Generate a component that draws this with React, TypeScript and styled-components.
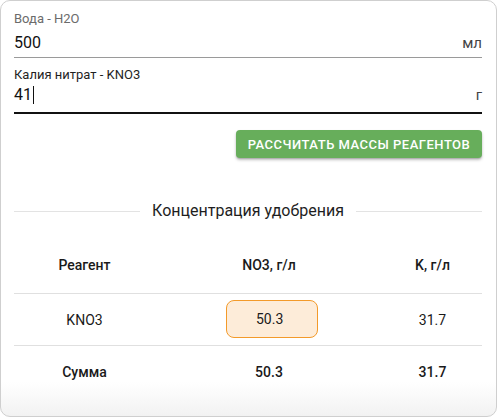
import React from "react";
import styled, { createGlobalStyle } from "styled-components";

const Global = createGlobalStyle`
  html, body { margin: 0; padding: 0; background: #fff; }
  body { font-family: Roboto, "Noto Sans", Arial, sans-serif; color: #1e1e1e; }
  * { box-sizing: border-box; }
`;

const Card = styled.div`
  width: 497px;
  height: 417px;
  border: 1px solid #cfcfcf;
  border-radius: 10px;
  padding: 10px 14px 0 13px;
  background: linear-gradient(to bottom, #fff 0, #fff calc(100% - 34px), #f2f2f2 100%);
  display: flex;
  flex-direction: column;
`;

const Field = styled.div<{ $gap: number }>`
  display: flex;
  flex-direction: column;
  margin-top: ${(p) => p.$gap}px;
`;

const Label = styled.label<{ $dark?: boolean }>`
  font-size: 13px;
  line-height: 16px;
  color: ${(p) => (p.$dark ? "#1f1f1f" : "#6b6b6b")};
`;

const InputRow = styled.div<{ $focused?: boolean; $top: number }>`
  display: flex;
  align-items: center;
  justify-content: space-between;
  margin-top: ${(p) => p.$top}px;
  font-size: 16px;
  line-height: 24px;
  padding-bottom: ${(p) => (p.$focused ? 5 : 2)}px;
  border-bottom: ${(p) => (p.$focused ? "2px solid #111" : "1px solid #9a9a9a")};
`;

const Value = styled.span`
  color: #111;
  display: inline-flex;
  align-items: center;
`;

const Caret = styled.span`
  display: inline-block;
  width: 1px;
  height: 18px;
  background: #111;
  margin-left: 1px;
`;

const Unit = styled.span`
  color: #444;
  font-size: 15px;
`;

const Actions = styled.div`
  display: flex;
  justify-content: flex-end;
  margin-top: 16px;
`;

const Button = styled.button`
  height: 28px;
  width: 246px;
  border: none;
  border-radius: 4px;
  background: #67ae5b;
  color: #fff;
  font-family: Roboto, sans-serif;
  font-weight: 500;
  font-size: 13px;
  letter-spacing: 0.5px;
  text-transform: uppercase;
  box-shadow: 0 2px 3px rgba(0, 0, 0, 0.25), 0 1px 1px rgba(0, 0, 0, 0.12);
  padding: 0;
`;

const Divider = styled.div`
  display: flex;
  align-items: center;
  gap: 12px;
  margin-top: 41px;
  font-size: 16px;
  line-height: 24px;
  color: #1e1e1e;
  &::before, &::after {
    content: "";
    flex: 1;
    height: 1px;
    background: #e3e3e3;
  }
`;

const Table = styled.div`
  display: grid;
  grid-template-columns: 141px 228px 1fr;
  margin-top: 14px;
`;

const Cell = styled.div<{ $bold?: boolean; $h: number; $last?: boolean }>`
  height: ${(p) => p.$h}px;
  display: flex;
  align-items: center;
  justify-content: center;
  font-size: 14px;
  font-weight: ${(p) => (p.$bold ? 500 : 400)};
  color: #1a1a1a;
  border-bottom: ${(p) => (p.$last ? "none" : "1px solid #e0e0e0")};
`;

const Highlight = styled.div`
  display: inline-flex;
  align-items: center;
  height: 38px;
  width: 92px;
  padding-left: 29px;
  margin-left: 6px;
  margin-top: -2px;
  border: 1px solid #f39a2a;
  border-radius: 8px;
  background: #fdecd9;
`;

const rows = [
  { cells: ["Реагент", "NO3, г/л", "K, г/л"], bold: true, h: 57 },
  { cells: ["KNO3", "50.3", "31.7"], bold: false, h: 52, hl: 1 },
  { cells: ["Сумма", "50.3", "31.7"], bold: true, h: 52, last: true },
];

export default function App() {
  return (
    <>
      <Global />
      <Card>
        <Field $gap={0}>
          <Label>Вода - H2O</Label>
          <InputRow $top={4}>
            <Value>500</Value>
            <Unit>мл</Unit>
          </InputRow>
        </Field>
        <Field $gap={9}>
          <Label $dark>Калия нитрат - KNO3</Label>
          <InputRow $top={0} $focused>
            <Value>
              41
              <Caret />
            </Value>
            <Unit>г</Unit>
          </InputRow>
        </Field>
        <Actions>
          <Button>Рассчитать массы реагентов</Button>
        </Actions>
        <Divider>Концентрация удобрения</Divider>
        <Table>
          {rows.map((r, ri) =>
            r.cells.map((c, ci) => (
              <Cell key={`${ri}-${ci}`} $bold={r.bold} $h={r.h} $last={r.last}>
                {r.hl === ci ? <Highlight>{c}</Highlight> : c}
              </Cell>
            ))
          )}
        </Table>
      </Card>
    </>
  );
}
